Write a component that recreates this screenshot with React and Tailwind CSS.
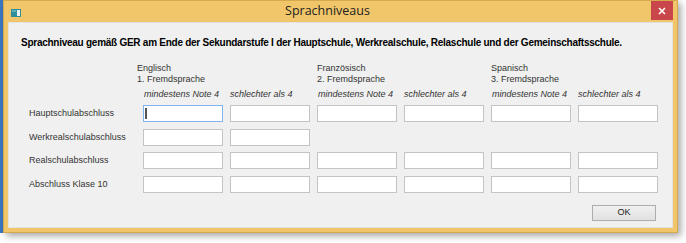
const cols = [
  { name: "Englisch", sub: "1. Fremdsprache", offset: "-ml-[6px]" },
  { name: "Französisch", sub: "2. Fremdsprache", offset: "" },
  { name: "Spanisch", sub: "3. Fremdsprache", offset: "" },
];

const rows = [
  { label: "Hauptschulabschluss", fields: 6, top: "mt-0" },
  { label: "Werkrealschulabschluss", fields: 2, top: "mt-[7px]" },
  { label: "Realschulabschluss", fields: 6, top: "mt-[6px]" },
  { label: "Abschluss Klase 10", fields: 6, top: "mt-[7px]" },
];

function Field({ focused }) {
  return (
    <div
      className={`relative w-[80px] h-[17px] bg-white border ${
        focused ? "border-[#7eb4ea]" : "border-[#c4c4c4]"
      }`}
    >
      {focused && <span className="absolute left-[1px] top-[2px] w-[2px] h-[11px] bg-[#555]" />}
    </div>
  );
}

export default function App() {
  return (
    <div
      className="w-[686px] h-[243px] bg-white flex overflow-hidden"
      style={{ fontFamily: '"Liberation Sans", Arial, sans-serif' }}
    >
      <div className="w-[3px] h-[233px] bg-[#3b78c4]" />
      <div className="w-[675px] h-[233px] bg-[#f1c66a] border border-[#d6a94f] shadow-[3px_3px_7px_rgba(0,0,0,0.35)] flex flex-col">
        {/* title bar */}
        <div className="h-[21px] flex items-center relative">
          <svg className="ml-[7px] mt-[3px]" width="10" height="8" viewBox="0 0 10 8">
            <rect x="0" y="0" width="10" height="8" fill="#2f8e9b" />
            <rect x="6" y="1" width="3" height="6" fill="#e8f4f5" />
            <rect x="1" y="1" width="4" height="2" fill="#5fb0bb" />
          </svg>
          <div
            className="flex-1 text-center text-[12.5px] text-[#222] -ml-[17px]"
            style={{ fontFamily: '"Open Sans", "Noto Sans", sans-serif' }}
          >
            Sprachniveaus
          </div>
          <div className="w-[22px] h-[19px] mr-[4px] mb-[1px] bg-[#c9464b] flex items-center justify-center self-start">
            <svg width="8" height="8" viewBox="0 0 8 8">
              <path d="M1 1L7 7M7 1L1 7" stroke="white" strokeWidth="1.6" />
            </svg>
          </div>
        </div>

        {/* client area */}
        <div className="mx-[4px] h-[206px] bg-[#f0f0f0] border border-[#e2e2e2] flex flex-col">
          <div className="ml-[12px] mt-[12px] text-[10px] font-bold text-black whitespace-nowrap tracking-[-0.26px]">
            Sprachniveau gemäß GER am Ende der Sekundarstufe I der Hauptschule, Werkrealschule, Relaschule und der Gemeinschaftsschule.
          </div>

          <div className="ml-[134px] mt-[13px] flex text-[9px] text-[#333] leading-[11px]">
            {cols.map((c) => (
              <div key={c.name} className="w-[174px] flex flex-col">
                <div className={c.offset}>{c.name}</div>
                <div className={c.offset}>{c.sub}</div>
                <div className="mt-[4px] flex italic">
                  <div className="w-[87px] pl-[1px]">mindestens Note 4</div>
                  <div className="w-[87px]">schlechter als 4</div>
                </div>
              </div>
            ))}
          </div>

          <div className="mt-[5px] flex flex-col">
            {rows.map((r, i) => (
              <div key={r.label} className={`flex items-center ${r.top}`}>
                <div className="w-[134px] pl-[20px] text-[9px] text-[#333]">{r.label}</div>
                <div className="flex gap-[7px]">
                  {Array.from({ length: r.fields }).map((_, j) => (
                    <Field key={j} focused={i === 0 && j === 0} />
                  ))}
                </div>
              </div>
            ))}
          </div>

          <div className="flex justify-end mt-[12px] mr-[16px]">
            <button className="w-[64px] h-[16px] border border-[#adadad] bg-gradient-to-b from-[#f0f0f0] to-[#e1e1e1] text-[9px] text-[#222] flex items-center justify-center">
              OK
            </button>
          </div>
        </div>
      </div>
    </div>
  );
}
